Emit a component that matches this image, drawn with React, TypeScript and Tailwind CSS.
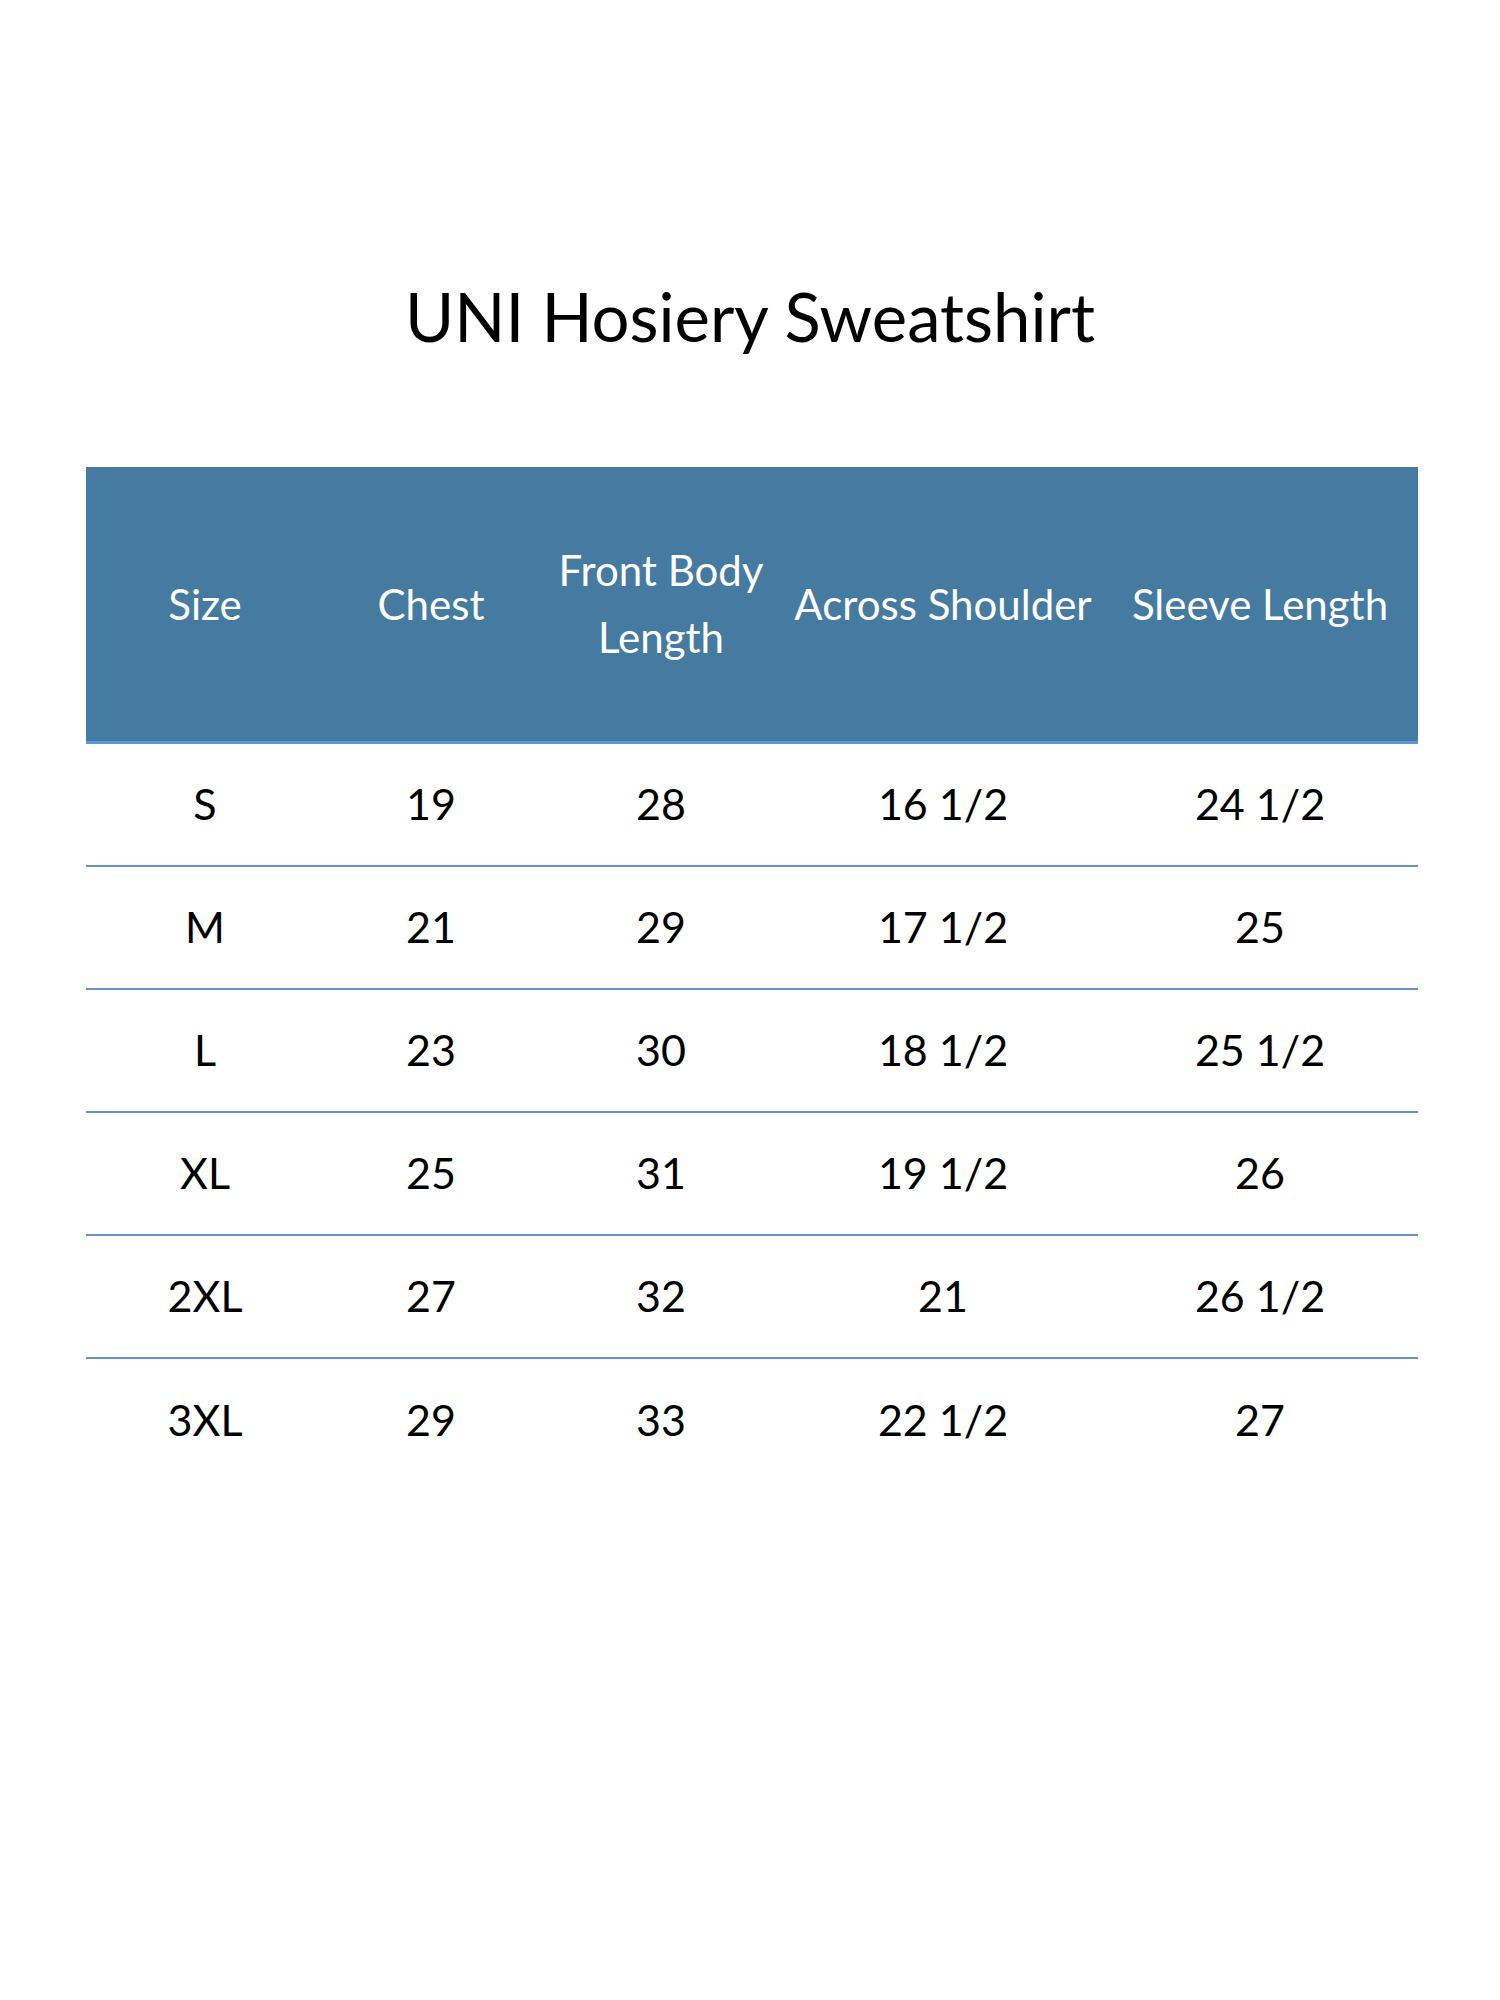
import React from 'react';

const headers = ['Size', 'Chest', 'Front Body Length', 'Across Shoulder', 'Sleeve Length'];

const rows: string[][] = [
  ['S', '19', '28', '16 1/2', '24 1/2'],
  ['M', '21', '29', '17 1/2', '25'],
  ['L', '23', '30', '18 1/2', '25 1/2'],
  ['XL', '25', '31', '19 1/2', '26'],
  ['2XL', '27', '32', '21', '26 1/2'],
  ['3XL', '29', '33', '22 1/2', '27'],
];

const cols = 'grid grid-cols-[238px_214px_246px_318px_316px]';

export default function App() {
  return (
    <div
      className="w-[1500px] min-h-[2000px] bg-white text-black"
      style={{ fontFamily: 'Lato, "Open Sans", sans-serif' }}
    >
      <h1 className="pt-[276px] text-center text-[67px] leading-[80px] font-normal">
        UNI Hosiery Sweatshirt
      </h1>

      <div className="ml-[86px] mt-[111px] w-[1332px]">
        {/* header band */}
        <div className={`${cols} h-[277px] bg-[#467ba1] border-b-[3px] border-[#5b9bd5] text-white text-[42px]`}>
          {headers.map((h) => (
            <div key={h} className="flex items-center justify-center text-center">
              {h === 'Front Body Length' ? (
                <span className="leading-[67px]">
                  Front Body
                  <br />
                  Length
                </span>
              ) : (
                <span className="whitespace-nowrap">{h}</span>
              )}
            </div>
          ))}
        </div>

        {rows.map((r, i) => (
          <div
            key={r[0]}
            className={`${cols} h-[123px] text-[43px] ${
              i < rows.length - 1 ? 'border-b-2 border-[#6496c0]' : ''
            }`}
          >
            {r.map((cell, j) => (
              <div key={j} className="flex items-center justify-center whitespace-nowrap">
                {cell}
              </div>
            ))}
          </div>
        ))}
      </div>
    </div>
  );
}
